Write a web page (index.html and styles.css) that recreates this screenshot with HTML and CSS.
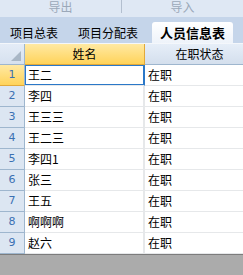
FILE: index.html
```html
<!DOCTYPE html>
<html>
<head>
<meta charset="utf-8">
<link rel="stylesheet" href="styles.css">
</head>
<body>
<div class="app">
  <div class="toolbar">
    <div class="tool">导出</div>
    <div class="sep"></div>
    <div class="tool">导入</div>
  </div>
  <div class="tabs">
    <div class="tab">项目总表</div>
    <div class="tab">项目分配表</div>
    <div class="tab active">人员信息表</div>
    <div class="tab">组</div>
  </div>
  <div class="sheet">
    <div class="corner"><span class="tri"></span></div>
    <div class="colhead sel">姓名</div>
    <div class="colhead">在职状态</div>

    <div class="rowhead sel">1</div><div class="cell a active">王二</div><div class="cell b">在职</div>
    <div class="rowhead">2</div><div class="cell a">李四</div><div class="cell b">在职</div>
    <div class="rowhead">3</div><div class="cell a">王三三</div><div class="cell b">在职</div>
    <div class="rowhead">4</div><div class="cell a">王二三</div><div class="cell b">在职</div>
    <div class="rowhead">5</div><div class="cell a">李四1</div><div class="cell b">在职</div>
    <div class="rowhead">6</div><div class="cell a">张三</div><div class="cell b">在职</div>
    <div class="rowhead">7</div><div class="cell a">王五</div><div class="cell b">在职</div>
    <div class="rowhead">8</div><div class="cell a">啊啊啊</div><div class="cell b">在职</div>
    <div class="rowhead">9</div><div class="cell a">赵六</div><div class="cell b">在职</div>
  </div>
  <div class="bottom"></div>
</div>
</body>
</html>
```
FILE: styles.css
```css
html, body {
  margin: 0;
  padding: 0;
  width: 243px;
  height: 275px;
  overflow: hidden;
  background: #ababab;
}
.app {
  display: flex;
  flex-direction: column;
  height: 275px;
  font-family: "Noto Sans CJK SC", "Noto Sans", sans-serif;
  font-size: 12px;
  color: #000;
}
.toolbar {
  height: 17px;
  display: flex;
  align-items: flex-start;
  background: #dfe8f4;
}
.tool {
  flex: 1;
  text-align: center;
  color: #9ba8b9;
  font-size: 12px;
  line-height: 14px;
}
.sep {
  width: 1px;
  height: 13px;
  background: #b3bfcf;
}
.tabs {
  height: 26px;
  display: flex;
  align-items: flex-end;
  background: #c5d5ea;
  padding-left: 3px;
  white-space: nowrap;
  overflow: hidden;
}
.tab {
  height: 21px;
  line-height: 21px;
  padding: 0 7px;
  margin-right: 6px;
  font-size: 12px;
  flex: none;
}
.tab.active {
  background: linear-gradient(#ffffff, #eef3fa);
  border-radius: 3px 3px 0 0;
  font-weight: bold;
  font-size: 13px;
  padding: 0 8px;
  margin-left: 1px;
  margin-right: 8px;
}
.sheet {
  display: grid;
  grid-template-columns: 25px 120px 110px;
  grid-auto-rows: 21px;
  grid-template-rows: 21px;
  border-top: 1px solid #f4f7fb;
  background: #fff;
}
.corner {
  position: relative;
  background: linear-gradient(#e4ecf7, #d6e1ef);
  border-right: 1px solid #9eb6ce;
  border-bottom: 1px solid #9eb6ce;
}
.tri {
  position: absolute;
  right: 3px;
  bottom: 3px;
  width: 0;
  height: 0;
  border-left: 10px solid transparent;
  border-bottom: 10px solid #a9b7c6;
}
.colhead {
  background: linear-gradient(#e6eef8, #d4dfed);
  border-bottom: 1px solid #9eb6ce;
  border-right: 1px solid #c5d2e2;
  text-align: center;
  line-height: 20px;
  font-size: 12px;
}
.colhead.sel {
  background: linear-gradient(#ffe9a3, #ffd35a);
  border-bottom: 1px solid #e1a93b;
  border-right: 1px solid #e1a93b;
}
.rowhead {
  background: #dce6f2;
  border-right: 1px solid #9eb6ce;
  border-bottom: 1px solid #9eb6ce;
  color: #3a70b2;
  text-align: center;
  line-height: 20px;
  font-size: 11px;
  font-family: "DejaVu Sans", sans-serif;
}
.rowhead.sel {
  background: linear-gradient(#ffe9a3, #ffd35a);
  border-bottom: 1px solid #e1a93b;
  color: #3a70b2;
}
.cell {
  border-bottom: 1px solid #e6e8ea;
  line-height: 20px;
  padding-left: 3px;
  white-space: nowrap;
  overflow: hidden;
}
.cell.a {
  border-right: 2px solid #e6e8ea;
}
.cell.active {
  box-shadow: inset 0 0 0 1px #2b78c8;
  border-right: 1px solid #2b78c8;
  border-bottom: 1px solid #e6e8ea;
}
.bottom {
  flex: 1;
  background: #ababab;
  border-top: 1px solid #7c7c7c;
}
```
